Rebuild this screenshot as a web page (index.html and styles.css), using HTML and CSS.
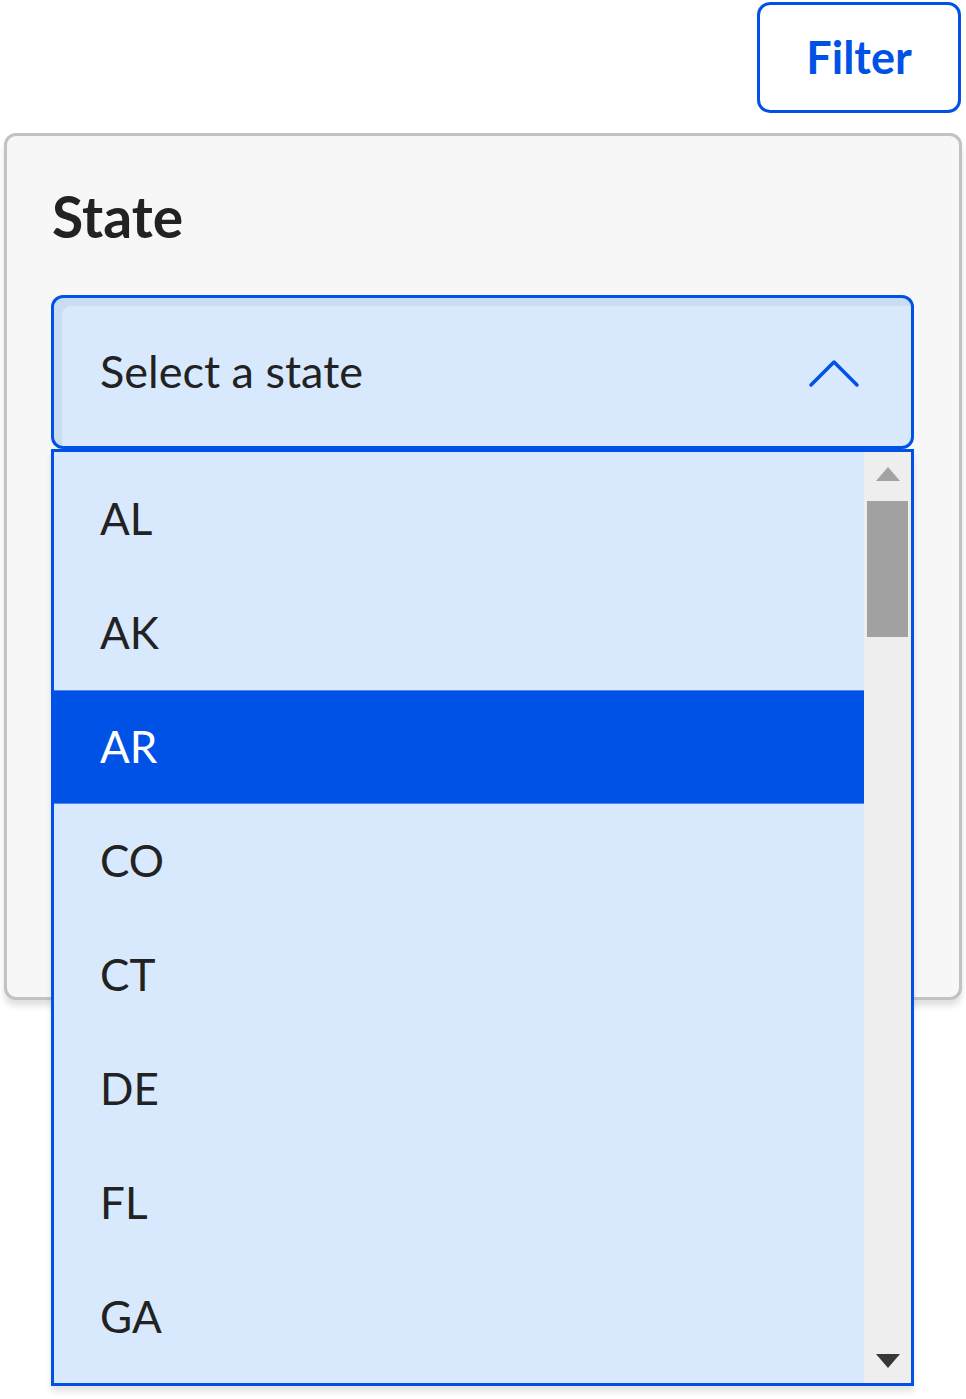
FILE: index.html
```html
<!DOCTYPE html>
<html lang="en">
<head>
<meta charset="utf-8">
<title>State filter</title>
<link rel="stylesheet" href="styles.css">
</head>
<body>
<div class="toolbar">
  <button class="filter-btn" type="button">Filter</button>
</div>
<section class="card">
  <h2 class="card-title">State</h2>
  <div class="select-wrap">
    <div class="select-box">
      <span class="select-label">Select a state</span>
      <svg class="chevron" width="52" height="30" viewBox="0 0 52 30" aria-hidden="true">
        <path d="M3 27 L26 4 L49 27" fill="none" stroke="#0052e6" stroke-width="3.5" stroke-linecap="round" stroke-linejoin="round"/>
      </svg>
    </div>
    <div class="listbox">
      <ul class="options">
        <li class="option">AL</li>
        <li class="option">AK</li>
        <li class="option selected">AR</li>
        <li class="option">CO</li>
        <li class="option">CT</li>
        <li class="option">DE</li>
        <li class="option">FL</li>
        <li class="option">GA</li>
      </ul>
      <div class="scrollbar">
        <span class="arrow-up"></span>
        <span class="thumb"></span>
        <span class="track-space"></span>
        <span class="arrow-down"></span>
      </div>
    </div>
  </div>
</section>
</body>
</html>
```
FILE: styles.css
```css
* {
  box-sizing: border-box;
}

html, body {
  margin: 0;
  padding: 0;
  background: #ffffff;
}

body {
  font-family: Lato, "Liberation Sans", sans-serif;
  color: #222222;
  width: 966px;
  height: 1399px;
  overflow: hidden;
}

.toolbar {
  display: flex;
  justify-content: flex-end;
  padding: 2px 5px 0 0;
}

.filter-btn {
  width: 204px;
  height: 111px;
  border: 3px solid #0052e6;
  border-radius: 13px;
  background: #ffffff;
  color: #0052e6;
  font-family: Lato, "Liberation Sans", sans-serif;
  font-weight: 700;
  font-size: 45px;
  line-height: 1.2;
  padding: 0 0 2px 0;
  cursor: pointer;
}

.card {
  margin: 20px 4px 0 4px;
  height: 867px;
  border: 3px solid #c2c2c2;
  border-radius: 12px;
  background: #f7f7f7;
  box-shadow: 0 6px 6px rgba(0, 0, 0, 0.12);
  padding: 46px 45px 0 44px;
}

.card-title {
  margin: 0;
  padding-left: 1px;
  font-size: 57px;
  font-weight: 700;
  line-height: 1.2;
  color: #222222;
}

.select-wrap {
  position: relative;
  margin-top: 45px;
}

.select-box {
  height: 154px;
  border: 3px solid #0052e6;
  border-radius: 12px;
  background: #d8e9fd;
  box-shadow: inset 8px 8px 0 0 #cadcf0;
  display: flex;
  align-items: center;
  justify-content: space-between;
  padding: 0 51px 3px 46px;
}

.select-label {
  font-size: 45px;
  line-height: 1.2;
  color: #222222;
}

.chevron {
  display: block;
  margin-top: 4px;
}

.listbox {
  position: absolute;
  top: 100%;
  left: 0;
  right: 0;
  height: 937px;
  border: 3px solid #0052e6;
  background: #d8e9fd;
  box-shadow: 0 6px 6px rgba(0, 0, 0, 0.1);
  display: flex;
  z-index: 2;
}

.options {
  flex: 1;
  list-style: none;
  margin: 0;
  padding: 10px 0 0 0;
  overflow: hidden;
}

.option {
  height: 114px;
  display: flex;
  align-items: center;
  padding: 0 0 2px 46px;
  font-size: 44px;
  line-height: 1.2;
  color: #222222;
}

.option.selected {
  background: #0052e6;
  color: #ffffff;
  box-shadow: inset 0 1px 0 #4f88ee, inset 0 -1px 0 #4f88ee;
}

.scrollbar {
  width: 47px;
  background: #eeeeee;
  display: flex;
  flex-direction: column;
  align-items: center;
  padding: 15px 0 15px 0;
}

.arrow-up {
  width: 0;
  height: 0;
  border-left: 12px solid transparent;
  border-right: 12px solid transparent;
  border-bottom: 14px solid #a3a3a3;
}

.thumb {
  width: 41px;
  height: 136px;
  margin-top: 20px;
  background: #a1a1a1;
}

.track-space {
  flex: 1;
}

.arrow-down {
  width: 0;
  height: 0;
  border-left: 12px solid transparent;
  border-right: 12px solid transparent;
  border-top: 14px solid #383838;
}
```
